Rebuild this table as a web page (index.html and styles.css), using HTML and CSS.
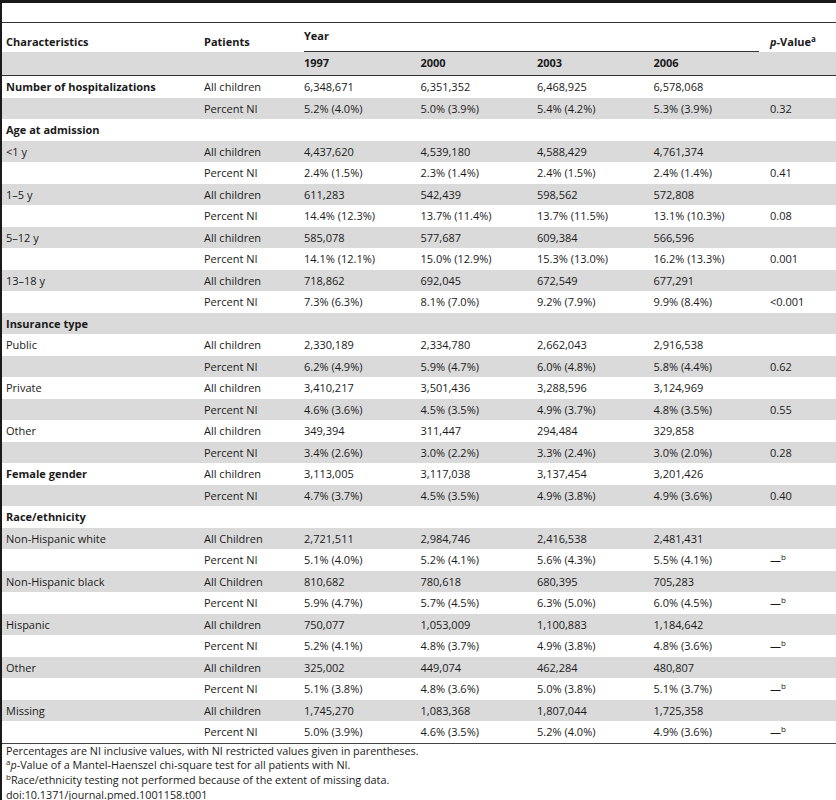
FILE: index.html
```html
<!DOCTYPE html>
<html lang="en">
<head>
    <meta charset="UTF-8">
    <title>Table 1. Hospitalizations of children with NI</title>
    <link rel="stylesheet" href="styles.css">
</head>
<body>
<div class="frame">
    <table class="data">
        <colgroup>
            <col class="c-char">
            <col class="c-pat">
            <col class="c-year">
            <col class="c-year">
            <col class="c-year">
            <col class="c-year">
            <col class="c-p">
        </colgroup>
        <thead>
            <tr class="head-top">
                <th>Characteristics</th>
                <th>Patients</th>
                <th colspan="4" class="year"><div class="year-label">Year</div></th>
                <th><i>p</i>-Value<sup>a</sup></th>
            </tr>
            <tr class="head-years">
                <th></th>
                <th></th>
                <th>1997</th>
                <th>2000</th>
                <th>2003</th>
                <th>2006</th>
                <th></th>
            </tr>
        </thead>
        <tbody>
            <tr><td class="group">Number of hospitalizations</td><td>All children</td><td>6,348,671</td><td>6,351,352</td><td>6,468,925</td><td>6,578,068</td><td></td></tr>
            <tr><td></td><td>Percent NI</td><td>5.2% (4.0%)</td><td>5.0% (3.9%)</td><td>5.4% (4.2%)</td><td>5.3% (3.9%)</td><td>0.32</td></tr>
            <tr><td class="group">Age at admission</td><td></td><td></td><td></td><td></td><td></td><td></td></tr>
            <tr><td>&lt;1 y</td><td>All children</td><td>4,437,620</td><td>4,539,180</td><td>4,588,429</td><td>4,761,374</td><td></td></tr>
            <tr><td></td><td>Percent NI</td><td>2.4% (1.5%)</td><td>2.3% (1.4%)</td><td>2.4% (1.5%)</td><td>2.4% (1.4%)</td><td>0.41</td></tr>
            <tr><td>1–5 y</td><td>All children</td><td>611,283</td><td>542,439</td><td>598,562</td><td>572,808</td><td></td></tr>
            <tr><td></td><td>Percent NI</td><td>14.4% (12.3%)</td><td>13.7% (11.4%)</td><td>13.7% (11.5%)</td><td>13.1% (10.3%)</td><td>0.08</td></tr>
            <tr><td>5–12 y</td><td>All children</td><td>585,078</td><td>577,687</td><td>609,384</td><td>566,596</td><td></td></tr>
            <tr><td></td><td>Percent NI</td><td>14.1% (12.1%)</td><td>15.0% (12.9%)</td><td>15.3% (13.0%)</td><td>16.2% (13.3%)</td><td>0.001</td></tr>
            <tr><td>13–18 y</td><td>All children</td><td>718,862</td><td>692,045</td><td>672,549</td><td>677,291</td><td></td></tr>
            <tr><td></td><td>Percent NI</td><td>7.3% (6.3%)</td><td>8.1% (7.0%)</td><td>9.2% (7.9%)</td><td>9.9% (8.4%)</td><td>&lt;0.001</td></tr>
            <tr><td class="group">Insurance type</td><td></td><td></td><td></td><td></td><td></td><td></td></tr>
            <tr><td>Public</td><td>All children</td><td>2,330,189</td><td>2,334,780</td><td>2,662,043</td><td>2,916,538</td><td></td></tr>
            <tr><td></td><td>Percent NI</td><td>6.2% (4.9%)</td><td>5.9% (4.7%)</td><td>6.0% (4.8%)</td><td>5.8% (4.4%)</td><td>0.62</td></tr>
            <tr><td>Private</td><td>All children</td><td>3,410,217</td><td>3,501,436</td><td>3,288,596</td><td>3,124,969</td><td></td></tr>
            <tr><td></td><td>Percent NI</td><td>4.6% (3.6%)</td><td>4.5% (3.5%)</td><td>4.9% (3.7%)</td><td>4.8% (3.5%)</td><td>0.55</td></tr>
            <tr><td>Other</td><td>All children</td><td>349,394</td><td>311,447</td><td>294,484</td><td>329,858</td><td></td></tr>
            <tr><td></td><td>Percent NI</td><td>3.4% (2.6%)</td><td>3.0% (2.2%)</td><td>3.3% (2.4%)</td><td>3.0% (2.0%)</td><td>0.28</td></tr>
            <tr><td class="group">Female gender</td><td>All children</td><td>3,113,005</td><td>3,117,038</td><td>3,137,454</td><td>3,201,426</td><td></td></tr>
            <tr><td></td><td>Percent NI</td><td>4.7% (3.7%)</td><td>4.5% (3.5%)</td><td>4.9% (3.8%)</td><td>4.9% (3.6%)</td><td>0.40</td></tr>
            <tr><td class="group">Race/ethnicity</td><td></td><td></td><td></td><td></td><td></td><td></td></tr>
            <tr><td>Non-Hispanic white</td><td>All Children</td><td>2,721,511</td><td>2,984,746</td><td>2,416,538</td><td>2,481,431</td><td></td></tr>
            <tr><td></td><td>Percent NI</td><td>5.1% (4.0%)</td><td>5.2% (4.1%)</td><td>5.6% (4.3%)</td><td>5.5% (4.1%)</td><td>—<sup>b</sup></td></tr>
            <tr><td>Non-Hispanic black</td><td>All Children</td><td>810,682</td><td>780,618</td><td>680,395</td><td>705,283</td><td></td></tr>
            <tr><td></td><td>Percent NI</td><td>5.9% (4.7%)</td><td>5.7% (4.5%)</td><td>6.3% (5.0%)</td><td>6.0% (4.5%)</td><td>—<sup>b</sup></td></tr>
            <tr><td>Hispanic</td><td>All children</td><td>750,077</td><td>1,053,009</td><td>1,100,883</td><td>1,184,642</td><td></td></tr>
            <tr><td></td><td>Percent NI</td><td>5.2% (4.1%)</td><td>4.8% (3.7%)</td><td>4.9% (3.8%)</td><td>4.8% (3.6%)</td><td>—<sup>b</sup></td></tr>
            <tr><td>Other</td><td>All children</td><td>325,002</td><td>449,074</td><td>462,284</td><td>480,807</td><td></td></tr>
            <tr><td></td><td>Percent NI</td><td>5.1% (3.8%)</td><td>4.8% (3.6%)</td><td>5.0% (3.8%)</td><td>5.1% (3.7%)</td><td>—<sup>b</sup></td></tr>
            <tr><td>Missing</td><td>All children</td><td>1,745,270</td><td>1,083,368</td><td>1,807,044</td><td>1,725,358</td><td></td></tr>
            <tr><td></td><td>Percent NI</td><td>5.0% (3.9%)</td><td>4.6% (3.5%)</td><td>5.2% (4.0%)</td><td>4.9% (3.6%)</td><td>—<sup>b</sup></td></tr>
        </tbody>
    </table>
    <div class="notes">
        <p>Percentages are NI inclusive values, with NI restricted values given in parentheses.</p>
        <p><sup>a</sup><i>p</i>-Value of a Mantel-Haenszel chi-square test for all patients with NI.</p>
        <p><sup>b</sup>Race/ethnicity testing not performed because of the extent of missing data.</p>
        <p>doi:10.1371/journal.pmed.1001158.t001</p>
    </div>
</div>
</body>
</html>
```

FILE: styles.css
```css
body {
    margin: 0;
    background: #ffffff;
    color: #1a1a1a;
    font-family: "Open Sans", "Noto Sans", sans-serif;
    font-size: 11px;
    line-height: 15px;
}
.frame {
    border-left: 2px solid #1a1a1a;
    border-top: 3px solid #1a1a1a;
    padding-top: 19px;
    height: 800px;
    box-sizing: border-box;
}
.data {
    width: 834px;
    table-layout: fixed;
    border-collapse: collapse;
    border-top: 1px solid #333;
    border-bottom: 1px solid #444;
}
.c-char { width: 196px; }
.c-pat { width: 100px; }
.c-year { width: 116.5px; }
.c-p { width: 72px; }
.data th,
.data td {
    padding: 0 4px 0 6px;
    text-align: left;
    white-space: nowrap;
}
.data th:first-child,
.data td:first-child {
    padding-left: 4px;
}
.head-top th {
    height: 26px;
    vertical-align: bottom;
    padding-bottom: 3px;
    font-weight: bold;
}
.head-top th.year {
    padding: 0 5px 0 6px;
}
.year-label {
    padding-bottom: 8px;
    border-bottom: 1px solid #333;
}
.head-years th {
    height: 20px;
    vertical-align: middle;
    padding-bottom: 3px;
    background: #dadada;
    border-bottom: 1px solid #333;
}
.data tbody td {
    height: 21.5px;
    padding-top: 0;
    padding-bottom: 0;
    vertical-align: middle;
}
.data tbody tr:nth-child(even) td {
    background: #dadada;
}
.group {
    font-weight: bold;
}
sup {
    font-size: 8px;
    line-height: 0;
    vertical-align: 4px;
}
.notes {
    padding: 0 0 0 4px;
    font-size: 10.8px;
    line-height: 14.7px;
}
.notes p {
    margin: 0;
}
```
